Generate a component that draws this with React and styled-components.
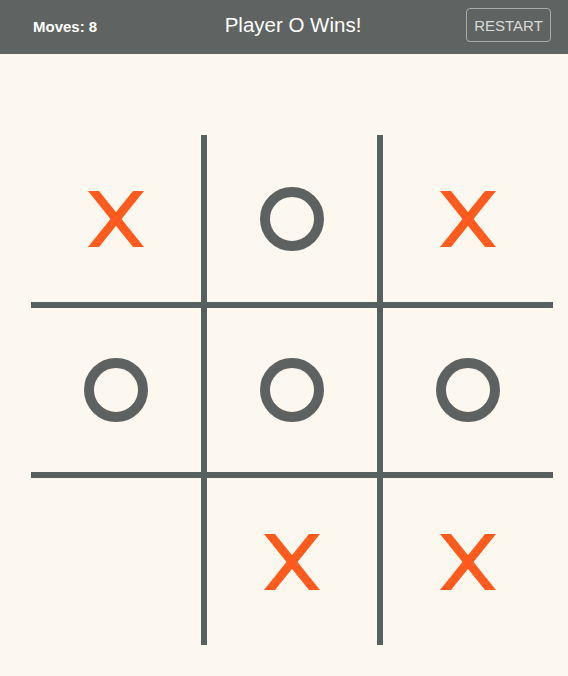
import React from 'react';
import styled, { createGlobalStyle } from 'styled-components';

const GlobalStyle = createGlobalStyle`
  body {
    margin: 0;
    background: #fcf8f0;
    font-family: "Liberation Sans", Arial, sans-serif;
  }
`;

const Header = styled.header`
  height: 54px;
  background: #5f6361;
  display: flex;
  align-items: center;
  padding: 0 17px 0 33px;
  color: #ffffff;
`;

const Moves = styled.div`
  flex: 1;
  font-size: 15px;
  font-weight: bold;
  margin-bottom: 1px;
`;

const Title = styled.h1`
  margin: 0 0 5px 2px;
  font-size: 20.5px;
  font-weight: normal;
`;

const Side = styled.div`
  flex: 1;
  display: flex;
  justify-content: flex-end;
`;

const RestartButton = styled.button`
  width: 85px;
  height: 34px;
  margin-bottom: 4px;
  padding: 0;
  background: transparent;
  border: 1px solid #a9acaa;
  border-radius: 4px;
  color: #d9dbd9;
  font-family: inherit;
  font-size: 15px;
  cursor: pointer;
`;

const Board = styled.div`
  margin: 81px 0 0 31px;
  width: 522px;
  display: grid;
  grid-template-columns: 170px 170px 170px;
  grid-template-rows: 167px 164px 167px;
  gap: 6px;
  background: #56605f;
`;

const Cell = styled.div`
  background: #fcf8f0;
  display: flex;
  align-items: center;
  justify-content: center;
`;

const Ring = styled.div`
  width: 64px;
  height: 64px;
  box-sizing: border-box;
  border: 10px solid #5d6160;
  border-radius: 50%;
`;

const Cross = () => (
  <svg width="56" height="56" viewBox="0 0 56 56">
    <polygon points="0,0 11,0 56,56 45,56" fill="#ff5b1f" />
    <polygon points="45,0 56,0 11,56 0,56" fill="#ff5b1f" />
  </svg>
);

const cells = ['X', 'O', 'X', 'O', 'O', 'O', '', 'X', 'X'];

const App = () => (
  <>
    <GlobalStyle />
    <Header>
      <Moves>Moves: 8</Moves>
      <Title>Player O Wins!</Title>
      <Side>
        <RestartButton>RESTART</RestartButton>
      </Side>
    </Header>
    <Board>
      {cells.map((v, i) => (
        <Cell key={i}>
          {v === 'X' && <Cross />}
          {v === 'O' && <Ring />}
        </Cell>
      ))}
    </Board>
  </>
);

export default App;
